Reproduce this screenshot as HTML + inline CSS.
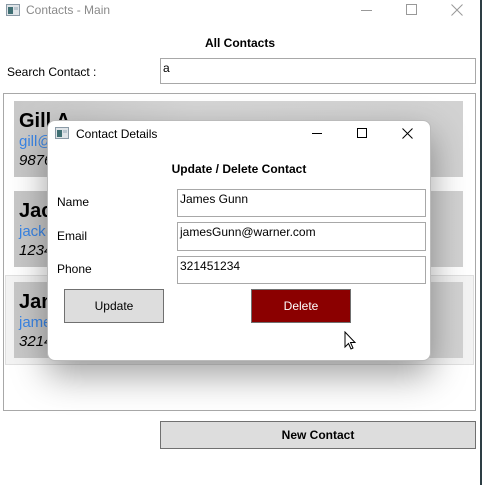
<!DOCTYPE html>
<html><head><style>
*{box-sizing:border-box;margin:0;padding:0}
body{width:482px;height:485px;background:#fff;position:relative;overflow:hidden;font-family:"Segoe UI","Liberation Sans",sans-serif;font-size:12px;color:#000}
.a{position:absolute}
.inp{position:absolute;border:1px solid #a8a8a8;background:#fff;padding:2px 2px;font-size:12px;line-height:14px}
.btn{position:absolute;border:1px solid #707070;background:#dddddd;text-align:center;font-size:12px}
.card{position:absolute;left:14px;width:449px;height:76px;background:linear-gradient(90deg,#c8c8c8,#d6d6d6 40%,#d2d2d2);padding-left:5px}
.card .n{font-weight:bold;font-size:20px;line-height:22px;margin-top:9px}
.card .e{color:#3a86e8;font-size:15px;line-height:20px}
.card .p{font-style:italic;font-size:15px;line-height:18px}
</style></head><body>
<div class="a" style="left:480px;top:0;width:2px;height:485px;background:#2d3e44"></div>
<svg class="a" style="left:6px;top:4px" width="14" height="12"><rect x="0.5" y="0.5" width="13" height="11" fill="#dfe4e8" stroke="#8a9aa6"/><rect x="2" y="3" width="5" height="7" fill="#3f6f73"/><rect x="8" y="3" width="4" height="3" fill="#b9c6cf"/></svg>
<div class="a" style="left:26px;top:3px;color:#8a8a8a;font-size:12px">Contacts - Main</div>
<div class="a" style="left:361px;top:10px;width:11px;height:1px;background:#999"></div>
<div class="a" style="left:406px;top:4px;width:11px;height:11px;border:1px solid #999"></div>
<svg class="a" style="left:451px;top:4px" width="12" height="12"><path d="M0.5 0.5L11.5 11.5M11.5 0.5L0.5 11.5" stroke="#999" stroke-width="1"/></svg>
<div class="a" style="left:0;width:480px;top:36px;text-align:center;font-weight:bold">All Contacts</div>
<div class="a" style="left:7px;top:65px">Search Contact :</div>
<div class="inp" style="left:160px;top:58px;width:316px;height:26px">a</div>
<div class="a" style="left:3px;top:93px;width:473px;height:318px;border:1px solid #a8a8a8"></div>
<div class="card" style="top:101px"><div class="n">Gill A</div><div class="e">gill@</div><div class="p">9876</div></div>
<div class="card" style="top:191px"><div class="n">Jack</div><div class="e">jack@</div><div class="p">1234</div></div>
<div class="a" style="left:5px;top:275px;width:469px;height:90px;border:1px solid #e0e0e0;background:#f3f3f3"></div>
<div class="card" style="top:282px"><div class="n">James</div><div class="e">james</div><div class="p">3214</div></div>
<div class="btn" style="left:160px;top:421px;width:316px;height:28px;font-weight:bold;line-height:27px">New Contact</div>
<div class="a" style="left:47px;top:120px;width:384px;height:241px;background:#fff;border-radius:8px;border:1px solid #bbb;box-shadow:0 14px 36px rgba(0,0,0,.38)">
</div>
<svg class="a" style="left:55px;top:127px" width="14" height="12"><rect x="0.5" y="0.5" width="13" height="11" fill="#dfe4e8" stroke="#8a9aa6"/><rect x="2" y="3" width="5" height="7" fill="#3f6f73"/><rect x="8" y="3" width="4" height="3" fill="#b9c6cf"/></svg>
<div class="a" style="left:76px;top:127px">Contact Details</div>
<div class="a" style="left:312px;top:133px;width:10px;height:1px;background:#000"></div>
<div class="a" style="left:357px;top:128px;width:10px;height:10px;border:1px solid #000"></div>
<svg class="a" style="left:402px;top:128px" width="11" height="11"><path d="M0.5 0.5L10.5 10.5M10.5 0.5L0.5 10.5" stroke="#000" stroke-width="1"/></svg>
<div class="a" style="left:47px;width:384px;top:162px;text-align:center;font-weight:bold">Update / Delete Contact</div>
<div class="a" style="left:57px;top:195px">Name</div>
<div class="a" style="left:57px;top:229px">Email</div>
<div class="a" style="left:57px;top:262px">Phone</div>
<div class="inp" style="left:177px;top:189px;width:249px;height:28px">James Gunn</div>
<div class="inp" style="left:177px;top:222px;width:249px;height:29px">jamesGunn@warner.com</div>
<div class="inp" style="left:177px;top:256px;width:249px;height:28px">321451234</div>
<div class="btn" style="left:64px;top:289px;width:100px;height:34px;line-height:33px">Update</div>
<div class="btn" style="left:251px;top:289px;width:100px;height:34px;line-height:33px;background:#8b0000;color:#fff">Delete</div>
<svg class="a" style="left:344px;top:331px" width="14" height="20"><path d="M1 1L1 16L4.5 12.5L7 18L9 17L6.5 11.5L11 11.5Z" fill="#fff" stroke="#000" stroke-width="1"/></svg>
</body></html>
